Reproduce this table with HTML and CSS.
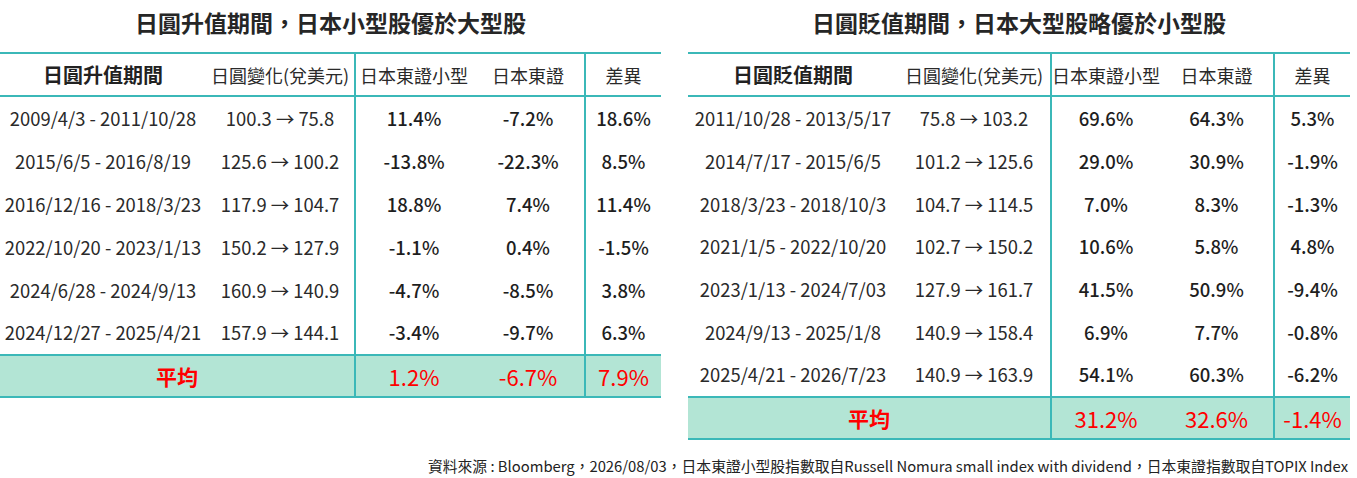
FILE: index.html
```html
<!DOCTYPE html>
<html lang="zh-Hant">
<head>
<meta charset="utf-8">
<title>日圓升貶值期間 日本大小型股表現</title>
<link rel="stylesheet" href="styles.css">
</head>
<body>
<div class="page">
  <div class="panels">
    <section class="panel panel-left">
      <h2 class="title">日圓升值期間，日本小型股優於大型股</h2>
      <table class="grid grid-left">
        <colgroup>
          <col class="w1"><col class="w2"><col class="w3"><col class="w4"><col class="w5">
        </colgroup>
        <thead>
          <tr>
            <th class="h-main">日圓升值期間</th>
            <th>日圓變化(兌美元)</th>
            <th class="sep">日本東證小型</th>
            <th>日本東證</th>
            <th class="sep">差異</th>
          </tr>
        </thead>
        <tbody>
          <tr><td>2009/4/3 - 2011/10/28</td><td>100.3 → 75.8</td><td class="sep num">11.4%</td><td class="num">-7.2%</td><td class="sep num">18.6%</td></tr>
          <tr><td>2015/6/5 - 2016/8/19</td><td>125.6 → 100.2</td><td class="sep num">-13.8%</td><td class="num">-22.3%</td><td class="sep num">8.5%</td></tr>
          <tr><td>2016/12/16 - 2018/3/23</td><td>117.9 → 104.7</td><td class="sep num">18.8%</td><td class="num">7.4%</td><td class="sep num">11.4%</td></tr>
          <tr><td>2022/10/20 - 2023/1/13</td><td>150.2 → 127.9</td><td class="sep num">-1.1%</td><td class="num">0.4%</td><td class="sep num">-1.5%</td></tr>
          <tr><td>2024/6/28 - 2024/9/13</td><td>160.9 → 140.9</td><td class="sep num">-4.7%</td><td class="num">-8.5%</td><td class="sep num">3.8%</td></tr>
          <tr><td>2024/12/27 - 2025/4/21</td><td>157.9 → 144.1</td><td class="sep num">-3.4%</td><td class="num">-9.7%</td><td class="sep num">6.3%</td></tr>
        </tbody>
        <tfoot>
          <tr><td colspan="2" class="avg-label">平均</td><td class="sep">1.2%</td><td>-6.7%</td><td class="sep">7.9%</td></tr>
        </tfoot>
      </table>
    </section>

    <section class="panel panel-right">
      <h2 class="title">日圓貶值期間，日本大型股略優於小型股</h2>
      <table class="grid grid-right">
        <colgroup>
          <col class="w1"><col class="w2"><col class="w3"><col class="w4"><col class="w5">
        </colgroup>
        <thead>
          <tr>
            <th class="h-main">日圓貶值期間</th>
            <th>日圓變化(兌美元)</th>
            <th class="sep">日本東證小型</th>
            <th>日本東證</th>
            <th class="sep">差異</th>
          </tr>
        </thead>
        <tbody>
          <tr><td>2011/10/28 - 2013/5/17</td><td>75.8 → 103.2</td><td class="sep num">69.6%</td><td class="num">64.3%</td><td class="sep num">5.3%</td></tr>
          <tr><td>2014/7/17 - 2015/6/5</td><td>101.2 → 125.6</td><td class="sep num">29.0%</td><td class="num">30.9%</td><td class="sep num">-1.9%</td></tr>
          <tr><td>2018/3/23 - 2018/10/3</td><td>104.7 → 114.5</td><td class="sep num">7.0%</td><td class="num">8.3%</td><td class="sep num">-1.3%</td></tr>
          <tr><td>2021/1/5 - 2022/10/20</td><td>102.7 → 150.2</td><td class="sep num">10.6%</td><td class="num">5.8%</td><td class="sep num">4.8%</td></tr>
          <tr><td>2023/1/13 - 2024/7/03</td><td>127.9 → 161.7</td><td class="sep num">41.5%</td><td class="num">50.9%</td><td class="sep num">-9.4%</td></tr>
          <tr><td>2024/9/13 - 2025/1/8</td><td>140.9 → 158.4</td><td class="sep num">6.9%</td><td class="num">7.7%</td><td class="sep num">-0.8%</td></tr>
          <tr><td>2025/4/21 - 2026/7/23</td><td>140.9 → 163.9</td><td class="sep num">54.1%</td><td class="num">60.3%</td><td class="sep num">-6.2%</td></tr>
        </tbody>
        <tfoot>
          <tr><td colspan="2" class="avg-label">平均</td><td class="sep">31.2%</td><td>32.6%</td><td class="sep">-1.4%</td></tr>
        </tfoot>
      </table>
    </section>
  </div>
  <p class="source">資料來源 : Bloomberg，2026/08/03，日本東證小型股指數取自Russell Nomura small index with dividend，日本東證指數取自TOPIX Index</p>
</div>
</body>
</html>
```

FILE: styles.css
```css
html, body {
  margin: 0;
  padding: 0;
  background: #ffffff;
}

.page {
  width: 1357px;
  font-family: "Noto Sans CJK TC", "Noto Sans CJK SC", sans-serif;
  color: #222222;
}

.panels {
  display: flex;
  align-items: flex-start;
  gap: 27px;
}

.panel-left { width: 661px; }
.panel-right { width: 662px; }

.title {
  margin: 0;
  height: 52px;
  line-height: 44px;
  font-size: 23px;
  font-weight: 700;
  text-align: center;
  color: #262626;
}

.grid {
  width: 100%;
  table-layout: fixed;
  border-collapse: separate;
  border-spacing: 0;
}

.grid-left .w1 { width: 206px; }
.grid-left .w2 { width: 148px; }
.grid-left .w3 { width: 118px; }
.grid-left .w4 { width: 112px; }
.grid-left .w5 { width: 77px; }

.grid-right .w1 { width: 210px; }
.grid-right .w2 { width: 152px; }
.grid-right .w3 { width: 110px; }
.grid-right .w4 { width: 113px; }
.grid-right .w5 { width: 77px; }

.grid th,
.grid td {
  padding: 0;
  text-align: center;
  vertical-align: middle;
  white-space: nowrap;
}

.grid thead tr { height: 45px; }

.grid th {
  border-top: 2px solid #3bb8b8;
  border-bottom: 2px solid #3bb8b8;
  font-size: 18px;
  font-weight: 400;
  color: #2a2a2a;
}

.grid th.h-main {
  font-size: 20px;
  font-weight: 700;
  color: #222222;
}

.grid tbody tr { height: 42.8px; }
.grid-right tbody tr { height: 42.7px; }

.grid tbody td {
  font-size: 18.4px;
  font-weight: 400;
  color: #2a2a2a;
}

.grid tbody td.num {
  font-size: 18.5px;
  color: #1e1e1e;
  font-weight: 500;
}

.grid .sep {
  border-left: 2px solid #3bb8b8;
}

.grid tfoot tr { height: 44px; }

.grid tfoot td {
  background: #b3e5d5;
  border-top: 2px solid #3bb8b8;
  border-bottom: 2px solid #3bb8b8;
  color: #ff0000;
  font-size: 22px;
  font-weight: 400;
}

.grid tfoot td.avg-label {
  font-size: 21px;
  font-weight: 700;
}

.source {
  margin: 16px 0 0;
  padding-right: 9px;
  text-align: right;
  font-size: 14.8px;
  line-height: 20px;
  color: #222222;
}
```
